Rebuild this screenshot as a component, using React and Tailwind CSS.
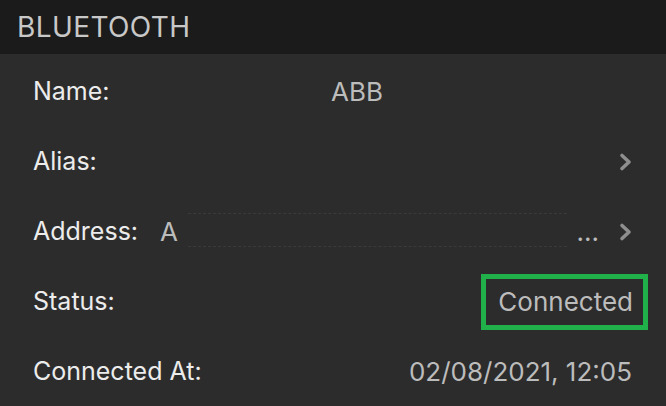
import React from "react";

const Chevron = () => (
  <svg width="16" height="20" viewBox="0 0 16 20" className="shrink-0 mr-[-1px]">
    <path
      d="M5 3.5 L12 10 L5 16.5"
      fill="none"
      stroke="#8e8e8e"
      strokeWidth="3.6"
      strokeLinecap="round"
      strokeLinejoin="round"
    />
  </svg>
);

const Row = ({ children }) => (
  <div className="flex h-[70px] items-center pl-[33px] pr-[34px] pt-[5px]">
    {children}
  </div>
);

const Label = ({ children, className = "" }) => (
  <span className={`text-[25px] text-[#ececec] ${className}`}>{children}</span>
);

const Value = ({ children, className = "" }) => (
  <span className={`text-[26px] text-[#bcbcbc] ${className}`}>{children}</span>
);

export default function App() {
  return (
    <div
      className="w-[666px] h-[406px] overflow-hidden bg-[#2c2c2c]"
      style={{ fontFamily: "Inter, 'Liberation Sans', sans-serif" }}
    >
      <div className="flex h-[54px] items-center bg-[#1b1b1b] pl-[17px]">
        <span className="text-[28px] tracking-[0.4px] text-[#c8c8c8]">BLUETOOTH</span>
      </div>

      <Row>
        <Label className="w-[298px]">Name:</Label>
        <Value>ABB</Value>
      </Row>

      <Row>
        <Label>Alias:</Label>
        <div className="ml-auto">
          <Chevron />
        </div>
      </Row>

      <Row>
        <Label>Address:</Label>
        <Value className="ml-[22px]">A</Value>
        <div className="mx-[10px] h-[34px] flex-1 self-start mt-[14px] border-y border-dashed border-[#3a3a3a]" />
        <Value className="mr-[18px] text-[20px]">...</Value>
        <Chevron />
      </Row>

      <Row>
        <Label>Status:</Label>
        <span className="ml-auto mr-[-16px] inline-flex h-[56px] items-center border-[5px] border-[#21b14b] pl-[12px] pr-[10px]">
          <Value>Connected</Value>
        </span>
      </Row>

      <Row>
        <Label>Connected At:</Label>
        <Value className="ml-auto">02/08/2021, 12:05</Value>
      </Row>
    </div>
  );
}
